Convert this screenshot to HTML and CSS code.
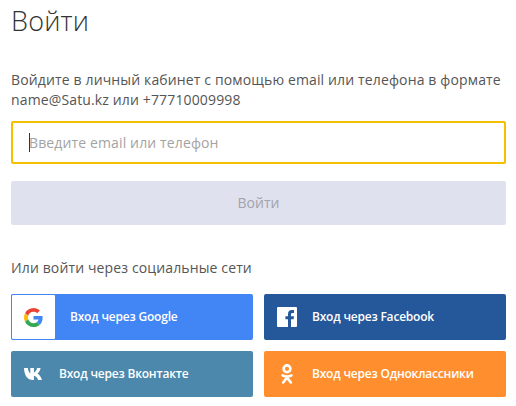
FILE: index.html
```html
<!DOCTYPE html>
<html lang="ru">
<head>
    <meta charset="UTF-8">
    <title>Войти</title>
    <link rel="stylesheet" href="styles.css">
</head>
<body>
    <div class="login">
        <h1 class="title">Войти</h1>
        <p class="hint">Войдите в личный кабинет с помощью email или телефона в формате name@Satu.kz или +77710009998</p>
        <div class="field"><span class="caret"></span><span class="placeholder">Введите email или телефон</span></div>
        <div class="submit">Войти</div>
        <p class="social-label">Или войти через социальные сети</p>
        <div class="social">
            <a class="social-btn google">
                <span class="google-box">
                    <svg width="19" height="19" viewBox="0 0 48 48">
                        <path fill="#EA4335" d="M24 9.500c3.500 0 6.700 1.200 9.200 3.600l6.900-6.900C35.900 2.400 30.500 0 24 0 14.600 0 6.500 5.400 2.600 13.200l8 6.200C12.400 13.700 17.700 9.500 24 9.500z"/>
                        <path fill="#4285F4" d="M47 24.500c0-1.600-.1-3.100-.4-4.500H24v9h12.900c-.6 3-2.200 5.500-4.700 7.200l7.700 6C44.400 38.500 47 32.100 47 24.500z"/>
                        <path fill="#FBBC05" d="M10.600 28.600c-.5-1.400-.8-3-.8-4.600s.3-3.200.8-4.600l-8-6.200C.9 16.500 0 20.100 0 24s.9 7.500 2.600 10.800l8-6.200z"/>
                        <path fill="#34A853" d="M24 48c6.500 0 11.900-2.100 15.900-5.800l-7.700-6c-2.200 1.400-4.900 2.300-8.200 2.300-6.300 0-11.600-4.200-13.400-10l-8 6.200C6.500 42.600 14.600 48 24 48z"/>
                    </svg>
                </span>
                <span class="label google-text">Вход через Google</span>
            </a>
            <a class="social-btn facebook">
                <svg class="icon" width="20" height="20" viewBox="0 0 20 20">
                    <path fill="#fff" d="M1 0h18a1 1 0 0 1 1 1v18a1 1 0 0 1-1 1h-5v-7.700h2.600l.4-3H14V7.400c0-.9.300-1.500 1.500-1.500H17V3.200c-.3 0-1.200-.1-2.200-.1-2.300 0-3.800 1.400-3.800 3.900v2.300H8.400v3H11V20H1a1 1 0 0 1-1-1V1a1 1 0 0 1 1-1z"/>
                </svg>
                <span class="label">Вход через Facebook</span>
            </a>
            <a class="social-btn vk">
                <svg class="icon-vk" width="20" height="12" viewBox="0 0 20 12">
                    <path fill="#fff" d="M0 0h3.900c.3 2.700 1.300 5 2.400 5.600V0h3.600v4.600C11.300 4.300 12.500 2.300 13.100 0h3.500c-.5 2.700-2 4.700-3.200 5.600 1.300.7 3.300 2.500 4.600 6.400h-3.900c-.9-2.500-2.400-3.900-4.200-4.200V12H9C3.600 12 .3 8 0 0z"/>
                </svg>
                <span class="label">Вход через Вконтакте</span>
            </a>
            <a class="social-btn ok">
                <svg class="icon" width="20" height="20" viewBox="0 0 20 20">
                    <circle cx="10" cy="4.800" r="3.400" fill="none" stroke="#fff" stroke-width="2.600"/>
                    <path fill="none" stroke="#fff" stroke-width="2.600" stroke-linecap="round" d="M5.600 11.300c2.800 1.600 6 1.600 8.800 0M10 13.500l-3.800 5M10 13.500l3.800 5"/>
                </svg>
                <span class="label">Вход через Одноклассники</span>
            </a>
        </div>
    </div>
</body>
</html>
```

FILE: styles.css
```css
body {
    margin: 0;
    background: #fff;
    font-family: 'Open Sans', sans-serif;
    color: #555;
}

.login {
    width: 495px;
    padding: 0 10px 0 11px;
}

.title {
    margin: 0;
    padding-top: 3px;
    font-size: 27px;
    line-height: 36px;
    font-weight: 300;
    letter-spacing: .2px;
    color: #333;
}

.hint {
    margin: 31px 0 0;
    font-size: 14px;
    line-height: 20px;
    letter-spacing: .14px;
    color: #555;
}

.field {
    display: flex;
    align-items: center;
    box-sizing: border-box;
    height: 43px;
    margin-top: 11px;
    padding-left: 16px;
    border: 2px solid #f5c000;
    border-radius: 2px;
}

.caret {
    width: 1px;
    height: 19px;
    background: #333;
}

.placeholder {
    margin-left: -1px;
    font-size: 14px;
    letter-spacing: .13px;
    color: #a3a3a3;
}

.submit {
    height: 44px;
    margin-top: 17px;
    border-radius: 2px;
    background: #dfe1ee;
    color: #a3a3ab;
    font-size: 14px;
    line-height: 44px;
    text-align: center;
}

.social-label {
    margin: 33px 0 0;
    font-size: 14px;
    line-height: 20px;
    letter-spacing: .13px;
    color: #555;
}

.social {
    display: grid;
    grid-template-columns: 242px 242px;
    grid-auto-rows: 46px;
    gap: 11px;
    margin-top: 16px;
}

.social-btn {
    display: flex;
    align-items: center;
    border-radius: 2px;
    color: #fff;
    font-size: 12px;
    font-weight: 600;
}

.label {
    padding-bottom: 2px;
    letter-spacing: -.2px;
}

.icon {
    margin: 0 15px 0 13px;
}

.icon-vk {
    margin: 0 15px 0 13px;
}

.google {
    background: #4285f4;
}

.google-box {
    display: flex;
    align-items: center;
    justify-content: center;
    box-sizing: border-box;
    width: 45px;
    height: 46px;
    border: 1px solid #4285f4;
    border-radius: 2px;
    background: #fff;
}

.google-text {
    margin-left: 14px;
}

.facebook {
    background: #25589a;
}

.vk {
    background: #4c87ac;
}

.ok {
    background: #ff8f2e;
}
```
